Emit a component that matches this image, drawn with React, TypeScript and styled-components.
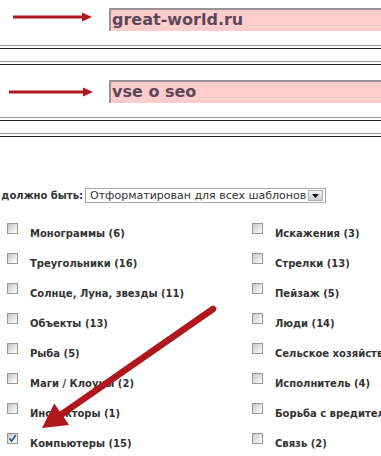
import React from 'react';
import styled, { createGlobalStyle } from 'styled-components';

const GlobalStyle = createGlobalStyle`
  html, body {
    margin: 0;
    padding: 0;
    background: #fff;
    overflow: hidden;
  }
  body {
    font-family: 'DejaVu Sans', Verdana, sans-serif;
    color: #333;
  }
`;

const Page = styled.div`
  position: relative;
  width: 381px;
  height: 456px;
  overflow: hidden;
`;

const Block = styled.section`
  padding: 8px 0 7px;
`;

const FieldRow = styled.div`
  display: flex;
  align-items: stretch;
  height: 23px;
`;

const ArrowSlot = styled.div`
  flex: 0 0 109px;
  display: flex;
  align-items: center;
`;

const Field = styled.div`
  flex: 1;
  min-width: 0;
  background: #ffcccc;
  border-top: 2px solid #9c9494;
  border-left: 2px solid #9c9494;
  padding-left: 1px;
  font-size: 16px;
  font-weight: bold;
  line-height: 19px;
  color: #5a4858;
  white-space: nowrap;
`;

const DoubleRule = styled.div<{ $top: number }>`
  margin-top: ${({ $top }) => $top}px;
  height: 2px;
  border-top: 1px solid #9a9a9a;
  border-bottom: 1px solid #222;
`;

const SelectRow = styled.div`
  display: flex;
  align-items: center;
  margin-top: 44px;
  height: 15px;
`;

const SelectLabel = styled.div`
  flex: 0 0 83px;
  display: flex;
  justify-content: flex-end;
  font-size: 10px;
  font-weight: bold;
  white-space: nowrap;
`;

const Select = styled.div`
  box-sizing: border-box;
  margin-left: 2px;
  width: 241px;
  height: 15px;
  border: 1px solid #a9a9a9;
  display: flex;
  align-items: center;
  justify-content: space-between;
  padding: 0 2px 0 4px;
  font-size: 11px;
  color: #333;
  white-space: nowrap;
`;

const DropButton = styled.span`
  width: 15px;
  height: 11px;
  box-sizing: border-box;
  border: 1px solid #b0b0b0;
  background: linear-gradient(#f4f4f4, #cdcdcd);
  display: flex;
  align-items: flex-end;
  justify-content: center;
  padding-bottom: 2px;
`;

const Grid = styled.div`
  display: grid;
  grid-template-columns: 245px 1fr;
  grid-auto-rows: 30px;
  margin-top: 20px;
  padding-left: 7px;
`;

const Item = styled.label`
  display: flex;
  align-items: flex-start;
  gap: 12px;
  white-space: nowrap;
`;

const Box = styled.span`
  flex: 0 0 11px;
  height: 11px;
  box-sizing: border-box;
  border: 1px solid #999;
  background: linear-gradient(135deg, #c6c6c6, #ececec 65%, #fff);
  display: flex;
  align-items: center;
  justify-content: center;
`;

const ItemText = styled.span`
  margin-top: 5px;
  font-size: 10px;
  font-weight: bold;
  line-height: 12px;
  color: #333;
`;

const Overlay = styled.svg`
  position: absolute;
  left: 0;
  top: 0;
  pointer-events: none;
`;

const RED = '#b0161c';

const SmallArrow = ({ x1, x2, y }: { x1: number; x2: number; y: number }) => (
  <svg width="109" height="23" viewBox="0 0 109 23">
    <line x1={x1} y1={y} x2={x2 - 8} y2={y} stroke={RED} strokeWidth="3" />
    <polygon points={`${x2 - 10},${y - 4.5} ${x2},${y} ${x2 - 10},${y + 4.5}`} fill={RED} />
  </svg>
);

const Tick = () => (
  <svg width="9" height="9" viewBox="0 0 9 9">
    <path d="M1.5 4.5 L3.6 7.2 L7.8 1" fill="none" stroke="#2a4fae" strokeWidth="1.6" />
  </svg>
);

const left = [
  ['Монограммы (6)', false],
  ['Треугольники (16)', false],
  ['Солнце, Луна, звезды (11)', false],
  ['Объекты (13)', false],
  ['Рыба (5)', false],
  ['Маги / Клоуны (2)', false],
  ['Инспекторы (1)', false],
  ['Компьютеры (15)', true],
] as const;

const right = [
  'Искажения (3)',
  'Стрелки (13)',
  'Пейзаж (5)',
  'Люди (14)',
  'Сельское хозяйство (3)',
  'Исполнитель (4)',
  'Борьба с вредителями (2)',
  'Связь (2)',
];

const App = () => {
  // tip of the big pointer and its tail
  const tail = { x: 213, y: 309 };
  const tip = { x: 42, y: 428 };
  const dx = tip.x - tail.x;
  const dy = tip.y - tail.y;
  const len = Math.hypot(dx, dy);
  const ux = dx / len;
  const uy = dy / len;
  const headLen = 24;
  const half = 13;
  const bx = tip.x - ux * headLen;
  const by = tip.y - uy * headLen;
  const head = `${tip.x},${tip.y} ${bx - uy * half},${by + ux * half} ${bx + uy * half},${by - ux * half}`;

  return (
    <Page>
      <GlobalStyle />
      <Block>
        <FieldRow>
          <ArrowSlot>
            <SmallArrow x1={13} x2={92} y={9} />
          </ArrowSlot>
          <Field>great-world.ru</Field>
        </FieldRow>
        <DoubleRule $top={14} />
        <DoubleRule $top={12} />
      </Block>
      <Block>
        <FieldRow>
          <ArrowSlot>
            <SmallArrow x1={9} x2={93} y={12} />
          </ArrowSlot>
          <Field>vse o seo</Field>
        </FieldRow>
        <DoubleRule $top={14} />
        <DoubleRule $top={12} />
      </Block>

      <SelectRow>
        <SelectLabel>
          <span>должно быть:</span>
        </SelectLabel>
        <Select>
          <span>Отформатирован для всех шаблонов</span>
          <DropButton>
            <svg width="7" height="4" viewBox="0 0 7 4">
              <polygon points="0,0 7,0 3.5,4" fill="#111" />
            </svg>
          </DropButton>
        </Select>
      </SelectRow>

      <Grid>
        {left.map(([text, checked], i) => (
          <React.Fragment key={text}>
            <Item>
              <Box>{checked ? <Tick /> : null}</Box>
              <ItemText>{text}</ItemText>
            </Item>
            <Item>
              <Box />
              <ItemText>{right[i]}</ItemText>
            </Item>
          </React.Fragment>
        ))}
      </Grid>

      <Overlay width="381" height="456" viewBox="0 0 381 456">
        <line
          x1={tail.x}
          y1={tail.y}
          x2={bx + ux * 2}
          y2={by + uy * 2}
          stroke={RED}
          strokeWidth="6.5"
          strokeLinecap="round"
        />
        <polygon points={head} fill={RED} />
      </Overlay>
    </Page>
  );
};

export default App;
